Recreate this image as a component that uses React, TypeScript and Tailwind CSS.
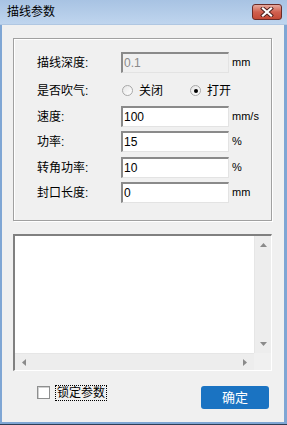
import React from "react";

const font = { fontFamily: '"Liberation Sans", "Noto Sans CJK SC", sans-serif' };

function Field({ value, disabled }: { value: string; disabled?: boolean }) {
  return (
    <div
      className={`w-[108px] h-[21px] border-t-2 border-l-2 border-t-[#8a8a8a] border-l-[#8a8a8a] border-b border-r border-b-[#e3e3e3] border-r-[#e3e3e3] pl-[1px] text-[12px] leading-[18px] ${
        disabled ? "bg-[#f0f0f0] text-[#8a8a8a]" : "bg-white text-black"
      }`}
    >
      {value}
    </div>
  );
}

function Row({ label, value, unit, disabled, mt }: { label: string; value: string; unit: string; disabled?: boolean; mt: string }) {
  return (
    <div className={`flex items-center h-[21px] ${mt}`}>
      <div className="w-[84px] text-[12px] text-black">{label}</div>
      <Field value={value} disabled={disabled} />
      <div className="ml-[3px] text-[11px] text-black">{unit}</div>
    </div>
  );
}

function Radio({ checked }: { checked?: boolean }) {
  return (
    <div className="w-[11px] h-[11px] rounded-full border border-[#a8a8a8] bg-gradient-to-br from-[#e6e6e6] to-white flex items-center justify-center">
      {checked && <div className="w-[4px] h-[4px] rounded-full bg-black" />}
    </div>
  );
}

export default function App() {
  return (
    <div style={font} className="w-[287px] h-[425px] bg-[#7fa6d4] flex flex-col border-b border-[#2c3e55]">
      {/* title bar */}
      <div className="h-[25px] shrink-0 bg-gradient-to-b from-[#a8c3e3] to-[#bfd5ee] flex items-center pl-[7px] pr-[5px] border-b border-[#b0c7e2]">
        <span className="text-[12px] text-black">描线参数</span>
        <div className="ml-auto w-[30px] h-[16px] rounded-[3px] border border-[#6b2b27] bg-gradient-to-b from-[#e6a99d] via-[#d0604f] to-[#c44a36] flex items-center justify-center">
          <svg width="14" height="10" viewBox="0 0 14 10">
            <path d="M3 1.5 L11 8.5 M11 1.5 L3 8.5" stroke="#4a1d1a" strokeWidth="4" strokeLinecap="square" />
            <path d="M3 1.5 L11 8.5 M11 1.5 L3 8.5" stroke="#ffffff" strokeWidth="2.2" strokeLinecap="square" />
          </svg>
        </div>
      </div>

      {/* client area */}
      <div className="flex-1 ml-[2px] mr-[3px] mb-[2px] bg-[#f0f0f0] flex flex-col">
        {/* group box */}
        <div className="mt-[13px] ml-[11px] w-[259px] h-[183px] border border-[#a0a0a0] shadow-[inset_1px_1px_0_#ffffff,1px_1px_0_#ffffff] pl-[23px]">
          <Row label="描线深度:" value="0.1" unit="mm" disabled mt="mt-[13px]" />
          <div className="flex items-center h-[21px] mt-[7px]">
            <div className="w-[84px] text-[12px] text-black">是否吹气:</div>
            <div className="flex items-center gap-[6px] ml-[1px]">
              <Radio />
              <span className="text-[12px] text-black">关闭</span>
            </div>
            <div className="flex items-center gap-[6px] ml-[27px]">
              <Radio checked />
              <span className="text-[12px] text-black">打开</span>
            </div>
          </div>
          <Row label="速度:" value="100" unit="mm/s" mt="mt-[5px]" />
          <Row label="功率:" value="15" unit="%" mt="mt-[4px]" />
          <Row label="转角功率:" value="10" unit="%" mt="mt-[5px]" />
          <Row label="封口长度:" value="0" unit="mm" mt="mt-[4px]" />
        </div>

        {/* text area */}
        <div className="mt-[13px] ml-[11px] w-[259px] h-[137px] border-t-2 border-l-2 border-t-[#808080] border-l-[#808080] border-b border-r border-b-white border-r-white bg-white flex flex-col">
          <div className="flex flex-1">
            <div className="flex-1" />
            <div className="w-[17px] bg-[#ededed] border-l border-[#e6e6e6] flex flex-col items-center justify-between py-[7px]">
              <svg width="7" height="4" viewBox="0 0 7 4"><path d="M3.5 0 L7 4 L0 4 Z" fill="#8a8a8a" /></svg>
              <svg width="7" height="4" viewBox="0 0 7 4"><path d="M0 0 L7 0 L3.5 4 Z" fill="#8a8a8a" /></svg>
            </div>
          </div>
          <div className="flex h-[17px]">
            <div className="flex-1 bg-[#ededed] border-t border-[#e6e6e6] flex items-center justify-between px-[7px]">
              <svg width="4" height="7" viewBox="0 0 4 7"><path d="M0 3.5 L4 0 L4 7 Z" fill="#8a8a8a" /></svg>
              <svg width="4" height="7" viewBox="0 0 4 7"><path d="M4 3.5 L0 0 L0 7 Z" fill="#8a8a8a" /></svg>
            </div>
            <div className="w-[17px] bg-[#f0f0f0]" />
          </div>
        </div>

        {/* bottom row */}
        <div className="flex items-start mt-[15px] ml-[35px]">
          <div className="w-[13px] h-[13px] border border-[#8e8f8f] bg-white shadow-[inset_1px_1px_0_#d0d0d0]" />
          <div className="ml-[5px] -mt-[1px] border border-dotted border-black px-[1px] text-[12px] leading-[14px] text-black">锁定参数</div>
          <div className="ml-auto mr-[15px] w-[68px] h-[23px] rounded-[3px] bg-[#1a73c2] text-white text-[13px] flex items-center justify-center">
            确定
          </div>
        </div>
      </div>
    </div>
  );
}
